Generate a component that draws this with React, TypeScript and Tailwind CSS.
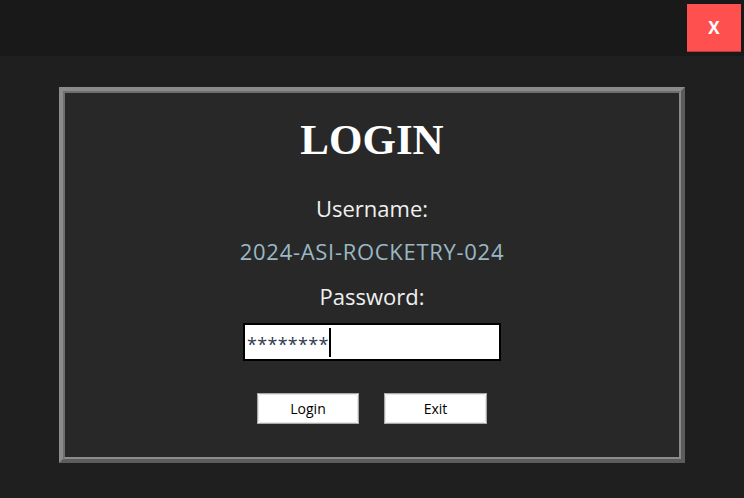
import React from "react";

export default function App() {
  const ui = { fontFamily: '"Open Sans", "Noto Sans", sans-serif' };
  return (
    <div className="w-[744px] h-[498px] bg-[#1f1f1f] overflow-hidden" style={ui}>
      <div className="h-[56px] bg-[#191919] flex justify-end pt-[4px] pr-[3px]">
        <button className="w-[54px] h-[48px] bg-[#ff5050] border-b border-[#b33a3a] text-white font-bold text-[17px] flex items-center justify-center">
          X
        </button>
      </div>
      <div className="ml-[59px] mt-[31px] w-[626px] h-[376px] border-[4px] border-t-[#8b8b8b] border-l-[#8b8b8b] border-b-[#5c5c5c] border-r-[#5c5c5c]">
        <div className="w-full h-full border-[2px] border-t-[#6e6e6e] border-l-[#6e6e6e] border-b-[#8b8b8b] border-r-[#8b8b8b] bg-[#282828] flex flex-col items-center">
          <div
            className="mt-[25px] text-[43px] leading-[43px] font-bold text-white"
            style={{ fontFamily: '"Liberation Serif", "Times New Roman", serif' }}
          >
            LOGIN
          </div>
          <div className="mt-[33px] text-[22px] leading-[28px] text-[#f0f0f0]">Username:</div>
          <div className="mt-[15px] text-[22px] leading-[28px] tracking-[0.7px] text-[#9ab8c4]">2024-ASI-ROCKETRY-024</div>
          <div className="mt-[17px] text-[22px] leading-[28px] text-[#f0f0f0]">Password:</div>
          <div className="mt-[13px] w-[258px] h-[38px] bg-white border-[2px] border-black flex items-center pl-[2px]">
            <span className="text-[18px] leading-[20px] mt-[3px] text-[#303a50] tracking-[0.3px]">********</span>
            <span className="w-[2px] h-[29px] bg-black" />
          </div>
          <div className="mt-[32px] flex gap-[25px]">
            <button className="w-[102px] h-[31px] bg-white border border-[#a8a8a8] text-[14px] text-black flex items-center justify-center">
              <span className="w-full h-full rounded-[3px] border border-[#e6e6e6] flex items-center justify-center">Login</span>
            </button>
            <button className="w-[103px] h-[31px] bg-white border border-[#a8a8a8] text-[14px] text-black flex items-center justify-center">
              <span className="w-full h-full rounded-[3px] border border-[#e6e6e6] flex items-center justify-center">Exit</span>
            </button>
          </div>
        </div>
      </div>
    </div>
  );
}
